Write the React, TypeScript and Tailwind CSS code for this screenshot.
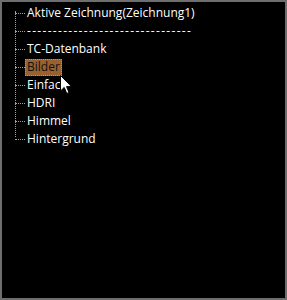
import React from "react";

const items = ["TC-Datenbank", "Bilder", "Einfach", "HDRI", "Himmel", "Hintergrund"];

function Row({ label, selected }: { label: string; selected?: boolean }) {
  return (
    <div className="flex h-[18px] items-center">
      <div className="w-[10px] border-t border-dotted border-[#a0a0a0]" />
      {selected ? (
        <span className="relative flex h-[17px] items-center border border-dotted border-[#7aa0d0] bg-[#9a6130] px-[1px] text-[#111]">
          {label}
        </span>
      ) : (
        <span className="ml-[2px] text-white">{label}</span>
      )}
    </div>
  );
}

export default function App() {
  return (
    <div className="h-[300px] w-[287px] border-2 border-[#6e6e6e] bg-black" style={{ fontFamily: '"Open Sans", "Noto Sans", sans-serif' }}>
      <div className="relative pl-[13px] pt-[2px] text-[12px] leading-none">
        <div className="absolute left-[13px] top-[9px] h-[126px] border-l border-dotted border-[#a0a0a0]" />
        <div className="flex h-[18px] items-center">
          <div className="w-[10px] border-t border-dotted border-[#a0a0a0]" />
          <span className="ml-[2px] text-white">Aktive Zeichnung(Zeichnung1)</span>
        </div>
        <div className="flex h-[18px] items-center">
          <div className="w-[10px] border-t border-dotted border-[#a0a0a0]" />
          <span className="ml-[2px] tracking-[1.3px] text-white">--------------------------------</span>
        </div>
        {items.map((it) => (
          <Row key={it} label={it} selected={it === "Bilder"} />
        ))}
        <svg className="absolute left-[58px] top-[73px]" width="13" height="20" viewBox="0 0 13 20">
          <path d="M0.5 0.5 L0.5 16 L4.2 12.4 L6.8 18.5 L9 17.5 L6.5 11.6 L11.5 11.6 Z" fill="white" stroke="black" strokeWidth="1" />
        </svg>
      </div>
    </div>
  );
}
